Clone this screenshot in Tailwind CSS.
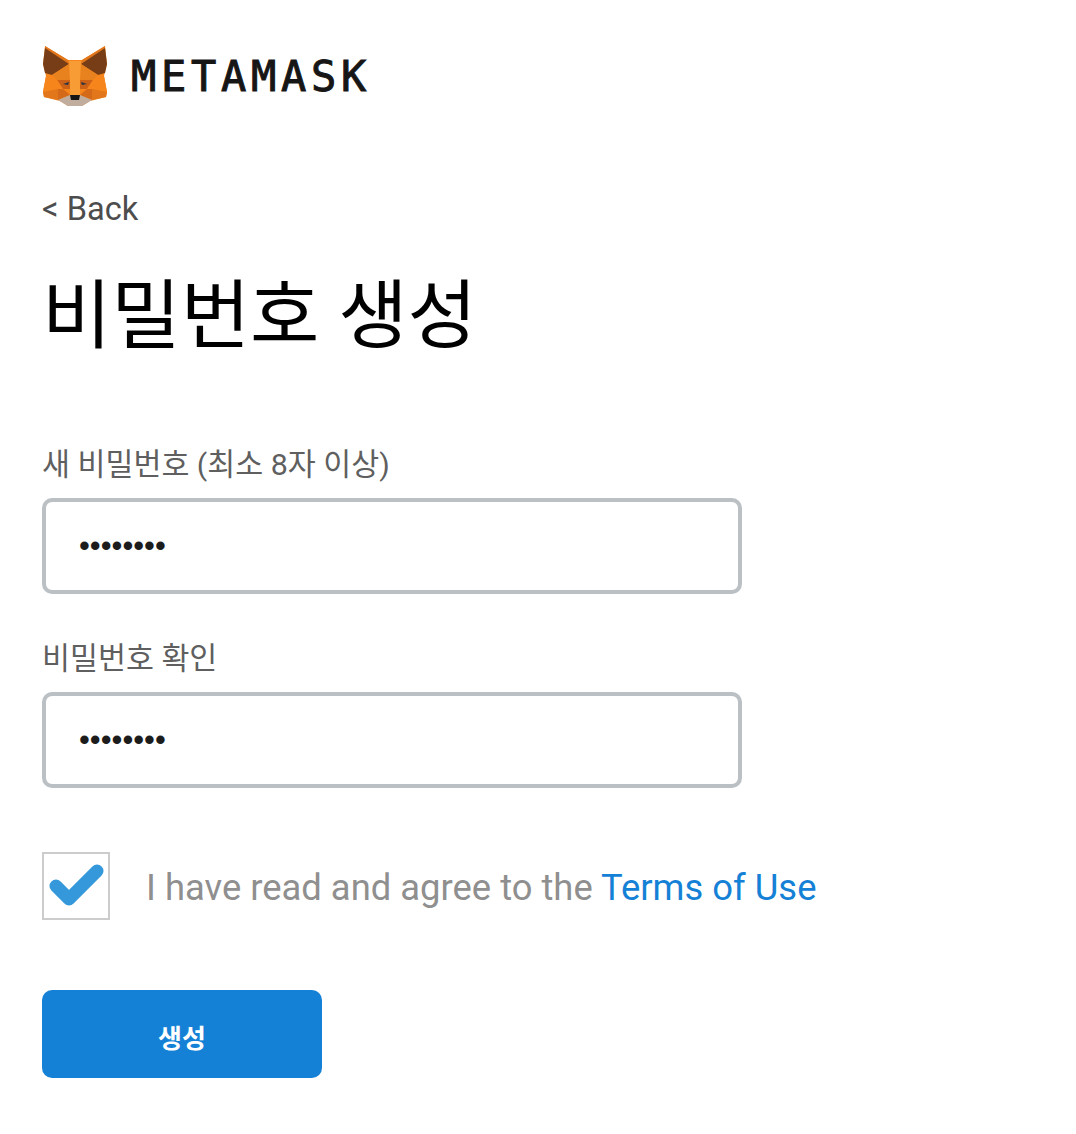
<!DOCTYPE html>
<html lang="ko">
<head>
    <meta charset="UTF-8">
    <meta name="viewport" content="width=device-width, initial-scale=1.0">
    <title>MetaMask</title>
    <script src="https://cdn.jsdelivr.net/npm/@tailwindcss/browser@4"></script>
</head>
<body class="bg-white min-h-screen font-['Roboto','Noto_Sans_CJK_KR',sans-serif]">
    <div class="w-[1076px] h-[1134px] px-[42px] pt-[45px] overflow-hidden">
        <!-- Logo -->
        <header class="flex items-center h-[61px]">
            <svg class="w-[66px] h-[61px]" viewBox="42 45 66 61">
                <g id="half">
                    <polygon fill="#f6851b" points="45,46 68,60 75,60 75,106 68,106 60,101 44,97 43,92 46,76 43,64"/>
                    <polygon fill="#e2761b" points="45,46 68,60 69,64 45,48"/>
                    <polygon fill="#763d16" points="45,48 69,64 52,75 45,73 43,64 44,56"/>
                    <polygon fill="#e8821e" points="69,64 52,75 57,80 70,80"/>
                    <polygon fill="#f89c35" points="69,61 75,61 75,96 70,95 70,80"/>
                    <polygon fill="#cd6116" points="57,80 70,80 70,89 63,89"/>
                    <polygon fill="#233447" points="63,84 69,82 68,85"/>
                    <polygon fill="#f6851b" points="46,76 52,75 57,80 63,89 58,89 43,92"/>
                    <polygon fill="#d4691a" points="58,89 63,89 70,95 58,100"/>
                    <polygon fill="#e2761b" points="43,92 58,89 58,100 44,97"/>
                    <polygon fill="#c0ad9e" points="58,100 70,95 75,95 75,106 68,106"/>
                    <polygon fill="#161616" points="70,95 75,95 75,100 71,100"/>
                </g>
                <use href="#half" transform="matrix(-1 0 0 1 150 0)"/>
            </svg>
            <span class="ml-[23px] mt-[2px] font-['DejaVu_Sans_Mono',monospace] text-[42px] leading-none tracking-[4.7px] text-[#161616] [-webkit-text-stroke:1px_#161616]">METAMASK</span>
        </header>

        <a class="block mt-[85px] text-[32.6px] leading-[36px] text-[#4d4d4d]">&lt; Back</a>
        <h1 class="mt-[44px] text-[75.4px] leading-[90px] font-normal text-black">비밀번호 생성</h1>

        <form class="mt-[83px]">
            <label class="block text-[30.4px] leading-[40px] text-[#5f5f5f] translate-y-px">새 비밀번호 (최소 8자 이상)</label>
            <input type="password" value="12345678" class="block mt-[14px] w-[700px] h-[96px] px-[33px] border-4 border-[#bbc0c5] rounded-[10px] font-['Liberation_Sans',sans-serif] text-[31px] text-[#1c1c1c] outline-none">

            <label class="block mt-[44px] text-[30.4px] leading-[40px] text-[#5f5f5f] translate-y-px">비밀번호 확인</label>
            <input type="password" value="12345678" class="block mt-[14px] w-[700px] h-[96px] px-[33px] border-4 border-[#bbc0c5] rounded-[10px] font-['Liberation_Sans',sans-serif] text-[31px] text-[#1c1c1c] outline-none">

            <div class="flex items-center mt-[64px]">
                <span class="flex items-center justify-center w-[68px] h-[68px] border-2 border-[#cccccc]">
                    <svg class="w-[58px] h-[46px]" viewBox="0 0 58 46">
                        <path d="M9 23 L22 36 L50 8" fill="none" stroke="#3498db" stroke-width="13" stroke-linecap="round" stroke-linejoin="round"/>
                    </svg>
                </span>
                <span class="ml-[36px] pt-[4px] text-[36.4px] leading-[44px] text-[#8f8f8f]">I have read and agree to the <a class="text-[#1581d6]">Terms of Use</a></span>
            </div>

            <button type="button" class="block mt-[70px] pt-[10px] w-[280px] h-[88px] rounded-[10px] bg-[#1581d6] text-white text-[26px] font-bold">생성</button>
        </form>
    </div>
</body>
</html>
